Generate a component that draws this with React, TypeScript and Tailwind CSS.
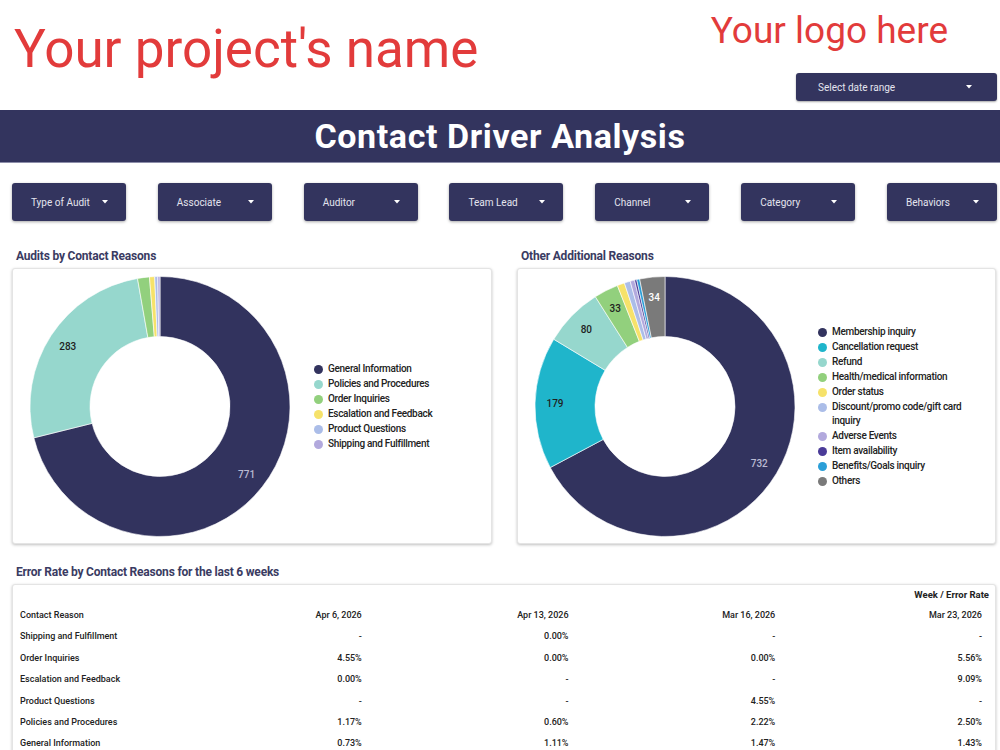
import React from "react";

const NAVY = "#33345e";

type Slice = { label: string; value: number; color: string; text?: string };

const chart1: Slice[] = [
  { label: "General Information", value: 771, color: "#32335e", text: "#b9bad2" },
  { label: "Policies and Procedures", value: 283, color: "#96d7cd", text: "#1f1f1f" },
  { label: "Order Inquiries", value: 16, color: "#92d07d", text: "#1f1f1f" },
  { label: "Escalation and Feedback", value: 7, color: "#f6e26a", text: "#1f1f1f" },
  { label: "Product Questions", value: 4, color: "#abbde8", text: "#1f1f1f" },
  { label: "Shipping and Fulfillment", value: 3, color: "#b2a9dd", text: "#1f1f1f" },
];

const chart2: Slice[] = [
  { label: "Membership inquiry", value: 732, color: "#32335e", text: "#b9bad2" },
  { label: "Cancellation request", value: 179, color: "#1fb5cb", text: "#1f1f1f" },
  { label: "Refund", value: 80, color: "#96d7cd", text: "#1f1f1f" },
  { label: "Health/medical information", value: 33, color: "#92d07d", text: "#1f1f1f" },
  { label: "Order status", value: 10, color: "#f6e26a", text: "#1f1f1f" },
  { label: "Discount/promo code/gift card inquiry", value: 8, color: "#abbde8", text: "#1f1f1f" },
  { label: "Adverse Events", value: 6, color: "#b2a9dd", text: "#1f1f1f" },
  { label: "Item availability", value: 3, color: "#4a3b98", text: "#ffffff" },
  { label: "Benefits/Goals inquiry", value: 4, color: "#2b9fd8", text: "#1f1f1f" },
  { label: "Others", value: 34, color: "#7a7a7a", text: "#ffffff" },
];

function pt(cx: number, cy: number, r: number, a: number): [number, number] {
  const rad = (a * Math.PI) / 180;
  return [cx + r * Math.sin(rad), cy - r * Math.cos(rad)];
}

function arcPath(cx: number, cy: number, R: number, r: number, a0: number, a1: number) {
  const large = a1 - a0 > 180 ? 1 : 0;
  const [x0, y0] = pt(cx, cy, R, a0);
  const [x1, y1] = pt(cx, cy, R, a1);
  const [x2, y2] = pt(cx, cy, r, a1);
  const [x3, y3] = pt(cx, cy, r, a0);
  return `M${x0},${y0} A${R},${R} 0 ${large} 1 ${x1},${y1} L${x2},${y2} A${r},${r} 0 ${large} 0 ${x3},${y3} Z`;
}

function Donut({ data, cx }: { data: Slice[]; cx: number }) {
  const total = data.reduce((s, d) => s + d.value, 0);
  let a = 0;
  const cy = 138.5;
  const parts = data.map((d) => {
    const a0 = a;
    const a1 = a + (d.value / total) * 360;
    a = a1;
    return { ...d, a0, a1 };
  });
  return (
    <svg width={298} height={276} className="shrink-0">
      {parts.map((p, i) => (
        <path key={i} d={arcPath(cx, cy, 130, 70, p.a0, p.a1)} fill={p.color} stroke="#ffffff" strokeWidth={0.6} />
      ))}
      {parts.map((p, i) => {
        if (p.a1 - p.a0 < 8) return null;
        const [x, y] = pt(cx, cy, 110, (p.a0 + p.a1) / 2);
        return (
          <text
            key={"t" + i}
            x={x}
            y={y}
            textAnchor="middle"
            dominantBaseline="central"
            fontSize={10}
            fontFamily="Roboto, sans-serif"
            fontWeight={500}
            fill={p.text}
          >
            {p.value}
          </text>
        );
      })}
    </svg>
  );
}

function Legend({ data }: { data: Slice[] }) {
  return (
    <div className="flex flex-col">
      {data.map((d) => (
        <div key={d.label} className="flex items-start gap-[5px] text-[10px] leading-[15.6px] tracking-[-0.3px] font-medium text-[#222]">
          <span className="mt-[3.5px] h-[9px] w-[9px] shrink-0 rounded-full" style={{ backgroundColor: d.color }} />
          <span className="max-w-[135px] leading-[14px] pt-[1px]">{d.label}</span>
        </div>
      ))}
    </div>
  );
}

function Caret() {
  return (
    <svg width="6" height="4" viewBox="0 0 6 4" className="shrink-0">
      <polygon points="0,0 6,0 3,3.5" fill="#ffffff" />
    </svg>
  );
}

const filters = ["Type of Audit", "Associate", "Auditor", "Team Lead", "Channel", "Category", "Behaviors"];

const rows: [string, string, string, string, string][] = [
  ["Shipping and Fulfillment", "-", "0.00%", "-", "-"],
  ["Order Inquiries", "4.55%", "0.00%", "0.00%", "5.56%"],
  ["Escalation and Feedback", "0.00%", "-", "-", "9.09%"],
  ["Product Questions", "-", "-", "4.55%", "-"],
  ["Policies and Procedures", "1.17%", "0.60%", "2.22%", "2.50%"],
  ["General Information", "0.73%", "1.11%", "1.47%", "1.43%"],
];

export default function App() {
  return (
    <div className="w-[1000px] bg-white" style={{ fontFamily: "Roboto, 'Noto Sans', sans-serif" }}>
      {/* Header */}
      <div className="flex h-[110px] justify-between">
        <div className="pl-[14px] pt-[23px] text-[53px] leading-none text-[#e23b3b]">Your project's name</div>
        <div className="flex flex-col items-end pr-[3px]">
          <div className="pr-[49px] pt-[12px] text-[37px] leading-none text-[#e23b3b]">Your logo here</div>
          <div className="mt-[24px] flex h-[28px] w-[201px] items-center justify-between rounded-[3px] pl-[22px] pr-[25px] text-[10px] text-[#e4e4ee] shadow-[0_1px_2px_rgba(0,0,0,0.35)]" style={{ backgroundColor: NAVY }}>
            <span>Select date range</span>
            <Caret />
          </div>
        </div>
      </div>

      {/* Title bar */}
      <div className="flex h-[53px] items-center justify-center border-b-[1px] border-[#8d8eaa] text-[34px] font-bold tracking-[0.6px] text-white" style={{ backgroundColor: NAVY }}>
        Contact Driver Analysis
      </div>

      {/* Filters */}
      <div className="mt-[20px] flex justify-between pl-[12px] pr-[3px]">
        {filters.map((f, i) => (
          <div
            key={f}
            className={
              "flex h-[38px] items-center justify-between rounded-[3px] pl-[19px] pr-[18px] text-[10px] text-[#e4e4ee] shadow-[0_1px_3px_rgba(0,0,0,0.35)] " +
              (i === filters.length - 1 ? "w-[110px]" : "w-[114px]")
            }
            style={{ backgroundColor: NAVY }}
          >
            <span>{f}</span>
            <Caret />
          </div>
        ))}
      </div>

      {/* Charts */}
      <div className="mt-[28px] flex gap-[25px] pl-[12px] pr-[4px]">
        <div className="flex w-[480px] flex-col">
          <div className="pl-[4px] text-[12px] font-bold leading-[14px] tracking-[-0.2px] text-[#3a3b62]">Audits by Contact Reasons</div>
          <div className="mt-[5px] flex h-[276px] items-center rounded-[3px] border border-[#e4e4e4] bg-white shadow-[0_1px_3px_rgba(0,0,0,0.25)]">
            <Donut data={chart1} cx={147} />
            <div className="pl-[3px]">
              <Legend data={chart1} />
            </div>
          </div>
        </div>
        <div className="flex w-[479px] flex-col">
          <div className="pl-[4px] text-[12px] font-bold leading-[14px] tracking-[-0.2px] text-[#3a3b62]">Other Additional Reasons</div>
          <div className="mt-[5px] flex h-[276px] items-center rounded-[3px] border border-[#e4e4e4] bg-white shadow-[0_1px_3px_rgba(0,0,0,0.25)]">
            <Donut data={chart2} cx={147} />
            <div className="pl-[2px]">
              <Legend data={chart2} />
            </div>
          </div>
        </div>
      </div>

      {/* Table */}
      <div className="mt-[21px] pl-[16px] text-[12px] font-bold leading-[14px] tracking-[-0.2px] text-[#3a3b62]">
        Error Rate by Contact Reasons for the last 6 weeks
      </div>
      <div className="ml-[12px] mr-[4px] mt-[5px] rounded-[3px] border border-[#e4e4e4] bg-white pb-[10px] pl-[7px] pr-[13px] shadow-[0_1px_3px_rgba(0,0,0,0.25)]">
        <div className="flex h-[20px] items-center justify-end text-[9.5px] font-bold text-[#222]">
          <span className="mr-[-7px]">Week / Error Rate</span>
        </div>
        <div className="grid h-[21.4px] grid-cols-[135px_1fr_1fr_1fr_1fr] items-center text-[9px] font-medium text-[#222]">
          <span>Contact Reason</span>
          <span className="text-right">Apr 6, 2026</span>
          <span className="text-right">Apr 13, 2026</span>
          <span className="text-right">Mar 16, 2026</span>
          <span className="text-right">Mar 23, 2026</span>
        </div>
        {rows.map((r) => (
          <div key={r[0]} className="grid h-[21.4px] grid-cols-[135px_1fr_1fr_1fr_1fr] items-center text-[9px] font-medium text-[#222]">
            <span>{r[0]}</span>
            <span className="text-right">{r[1]}</span>
            <span className="text-right">{r[2]}</span>
            <span className="text-right">{r[3]}</span>
            <span className="text-right">{r[4]}</span>
          </div>
        ))}
      </div>
    </div>
  );
}
